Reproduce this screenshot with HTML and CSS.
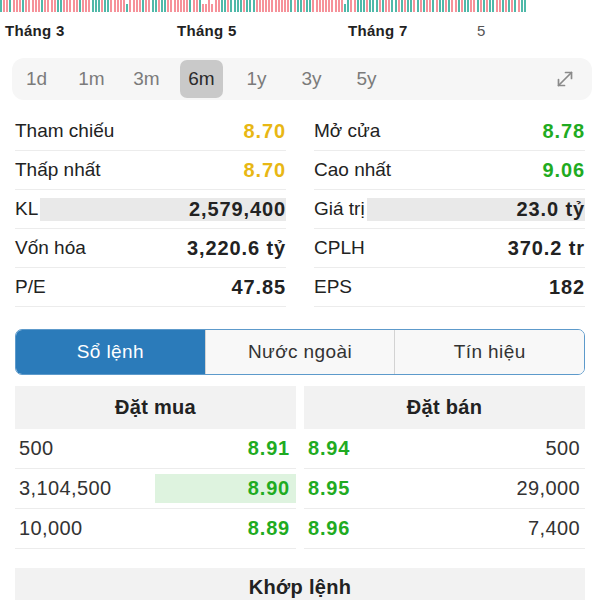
FILE: index.html
```html
<!DOCTYPE html>
<html lang="vi">
<head>
<meta charset="utf-8">
<title>Chi tiết cổ phiếu</title>
<link rel="stylesheet" href="styles.css">
</head>
<body>
<div class="bars">
<i class="g"></i><i class="r"></i><i class="r"></i><i class="g"></i><i class="r"></i><i class="r"></i><i class="r"></i><i class="g"></i><i class="r"></i><i class="r"></i><i class="r"></i><i class="r"></i><i class="r"></i><i class="g"></i><i class="r"></i><i class="r"></i><i class="r"></i><i class="r"></i><i class="g"></i><i class="g"></i><i class="r"></i><i class="r"></i><i class="r"></i><i class="r"></i><i class="r"></i><i class="g"></i><i class="r"></i><i class="r"></i><i class="r"></i><i class="g"></i><i class="g"></i><i class="g"></i><i class="r"></i><i class="g"></i><i class="g"></i><i class="r"></i><i class="r"></i><i class="r"></i><i class="r"></i><i class="r"></i><i class="g s"></i><i class="r"></i><i class="r"></i><i class="r"></i><i class="r"></i><i class="g"></i><i class="r"></i><i class="r"></i><i class="g"></i><i class="g"></i><i class="r"></i><i class="g"></i><i class="g"></i><i class="r"></i><i class="r"></i><i class="r"></i><i class="r"></i><i class="r"></i><i class="r"></i><i class="r"></i><i class="g"></i><i class="r"></i><i class="r"></i><i class="g"></i>
<i class="r s"></i><i class="r s"></i><i class="r"></i><i class="r s"></i><i class="r"></i><i class="r"></i><i class="g"></i><i class="g"></i><i class="r"></i><i class="g"></i><i class="g"></i><i class="g"></i><i class="g"></i><i class="r"></i><i class="g"></i><i class="g"></i><i class="g"></i><i class="r"></i><i class="r"></i><i class="r"></i><i class="r"></i><i class="r"></i><i class="r"></i><i class="r"></i><i class="r"></i><i class="r"></i><i class="r"></i><i class="r"></i><i class="g"></i><i class="r"></i><i class="g"></i><i class="g"></i><i class="r"></i><i class="g"></i><i class="g"></i><i class="r"></i><i class="r"></i><i class="r"></i><i class="r"></i><i class="r"></i><i class="r"></i><i class="r"></i><i class="r"></i><i class="r"></i><i class="r"></i><i class="g s"></i><i class="g"></i><i class="r"></i><i class="r"></i><i class="g"></i><i class="g"></i><i class="g"></i><i class="r"></i><i class="g"></i><i class="g"></i><i class="g"></i><i class="r"></i><i class="g"></i><i class="r"></i><i class="r"></i><i class="g"></i><i class="g"></i>
<i class="r"></i><i class="g"></i><i class="r"></i><i class="g"></i><i class="g"></i><i class="r"></i><i class="g"></i><i class="r"></i><i class="g"></i><i class="r"></i><i class="r"></i><i class="g"></i><i class="r"></i><i class="g"></i><i class="g"></i><i class="r"></i><i class="g"></i><i class="r"></i><i class="r"></i><i class="g"></i><i class="r"></i><i class="g"></i><i class="g"></i><i class="r"></i><i class="r"></i><i class="g"></i><i class="r"></i><i class="g"></i><i class="r"></i><i class="g"></i><i class="g"></i><i class="r"></i><i class="r"></i><i class="g"></i><i class="r"></i><i class="g"></i><i class="r"></i><i class="g"></i><i class="r"></i><i class="g"></i><i class="g"></i>
</div>

<div class="months">
  <span>Tháng 3</span>
  <span>Tháng 5</span>
  <span>Tháng 7</span>
  <span class="plain">5</span>
</div>

<div class="range">
  <span class="range-item">1d</span>
  <span class="range-item">1m</span>
  <span class="range-item">3m</span>
  <span class="range-item active">6m</span>
  <span class="range-item">1y</span>
  <span class="range-item">3y</span>
  <span class="range-item">5y</span>
  <svg class="expand" viewBox="0 0 20 20" width="20" height="20" fill="none" stroke="#8a8a8a" stroke-width="1.7" stroke-linecap="round" stroke-linejoin="round">
    <path d="M3.5 16.5 L16.5 3.5"/>
    <path d="M10.5 3.5 H16.5 V9.5"/>
    <path d="M3.5 10.5 V16.5 H9.5"/>
  </svg>
</div>

<div class="stats">
  <div class="stat"><span>Tham chiếu</span><span class="v yellow">8.70</span></div>
  <div class="stat"><span>Mở cửa</span><span class="v green">8.78</span></div>
  <div class="stat"><span>Thấp nhất</span><span class="v yellow">8.70</span></div>
  <div class="stat"><span>Cao nhất</span><span class="v green">9.06</span></div>
  <div class="stat"><span>KL</span><span class="v bar">2,579,400</span></div>
  <div class="stat"><span>Giá trị</span><span class="v bar">23.0 tỷ</span></div>
  <div class="stat"><span>Vốn hóa</span><span class="v">3,220.6 tỷ</span></div>
  <div class="stat"><span>CPLH</span><span class="v">370.2 tr</span></div>
  <div class="stat"><span>P/E</span><span class="v">47.85</span></div>
  <div class="stat"><span>EPS</span><span class="v">182</span></div>
</div>

<div class="tabs">
  <div class="tab active">Sổ lệnh</div>
  <div class="tab">Nước ngoài</div>
  <div class="tab">Tín hiệu</div>
</div>

<div class="book">
  <div class="book-col">
    <div class="book-head">Đặt mua</div>
    <div class="book-row buy"><span class="qty">500</span><span class="price">8.91</span></div>
    <div class="book-row buy"><span class="qty">3,104,500</span><span class="price hl" style="width:141px">8.90</span></div>
    <div class="book-row buy"><span class="qty">10,000</span><span class="price">8.89</span></div>
  </div>
  <div class="book-col">
    <div class="book-head">Đặt bán</div>
    <div class="book-row sell"><span class="price">8.94</span><span class="qty">500</span></div>
    <div class="book-row sell"><span class="price">8.95</span><span class="qty">29,000</span></div>
    <div class="book-row sell"><span class="price">8.96</span><span class="qty">7,400</span></div>
  </div>
</div>

<div class="khop">Khớp lệnh</div>
</body>
</html>
```

FILE: styles.css
```css
* { box-sizing: border-box; }

html, body {
  margin: 0;
  background: #ffffff;
}

body {
  width: 600px;
  height: 600px;
  overflow: hidden;
  font-family: "Liberation Sans", Arial, sans-serif;
  color: #222222;
}

/* chart volume strip */
.bars {
  display: flex;
  justify-content: space-between;
  align-items: flex-end;
  width: 527px;
  height: 12px;
}
.bars i {
  display: block;
  width: 2px;
  height: 12px;
}
.bars .r { background: #f6929a; }
.bars .g { background: #4fb9a9; }
.bars .s { height: 8px; }

/* month axis */
.months {
  display: grid;
  grid-template-columns: 172px 171px 129px auto;
  padding-left: 5px;
  margin-top: 11px;
  font-size: 15px;
  line-height: 16px;
  letter-spacing: 0.3px;
  font-weight: bold;
  color: #222222;
}
.months .plain {
  font-weight: normal;
  color: #555555;
}

/* range selector */
.range {
  display: flex;
  align-items: center;
  gap: 12px;
  height: 42px;
  margin: 19px 8px 0 12px;
  padding: 0 3px;
  background: #f6f6f6;
  border-radius: 12px;
}
.range-item {
  width: 43px;
  height: 38px;
  line-height: 38px;
  text-align: center;
  font-size: 19px;
  color: #7b7b7b;
  border-radius: 7px;
}
.range-item.active {
  background: #c9c9c9;
  color: #2a2a2a;
}
.expand {
  margin-left: auto;
  margin-right: 14px;
}

/* stats grid */
.stats {
  display: grid;
  grid-template-columns: 271px 271px;
  column-gap: 28px;
  padding: 0 15px;
  margin-top: 12px;
}
.stat {
  display: flex;
  align-items: center;
  height: 39px;
  border-bottom: 1px solid #ececec;
  font-size: 19px;
  color: #222222;
}
.stat .v {
  margin-left: auto;
  font-size: 20px;
  letter-spacing: 0.9px;
  font-weight: bold;
}
.stat .bar {
  flex: 1;
  height: 23px;
  margin-left: 2px;
  display: flex;
  align-items: center;
  justify-content: flex-end;
  background: #e9e9e9;
}
.yellow { color: #e8b714; }
.green { color: #1fab22; }

/* segmented tabs */
.tabs {
  display: flex;
  height: 46px;
  margin: 22px 15px 0;
  border: 1px solid #5d9acb;
  border-radius: 7px;
  overflow: hidden;
}
.tab {
  flex: 1;
  display: flex;
  align-items: center;
  justify-content: center;
  font-size: 19px;
  letter-spacing: 0.4px;
  color: #333333;
  background: #f8f8f8;
  border-left: 1px solid #d3d3d3;
}
.tab.active {
  background: #2b7bba;
  color: #ffffff;
  border-left: none;
}

/* order book */
.book {
  display: grid;
  grid-template-columns: 1fr 1fr;
  column-gap: 8px;
  margin: 11px 15px 0;
}
.book-head {
  height: 43px;
  display: flex;
  align-items: center;
  justify-content: center;
  background: #f2f2f2;
  font-size: 20px;
  letter-spacing: 0.3px;
  font-weight: bold;
  color: #222222;
}
.book-row {
  display: flex;
  align-items: center;
  height: 40px;
  border-bottom: 1px solid #ececec;
  font-size: 20px;
}
.book-row .qty {
  flex: 1;
  letter-spacing: 0.4px;
  color: #333333;
}
.book-row .price {
  font-weight: bold;
  letter-spacing: 0.8px;
  color: #1fab22;
}
.book-row.buy { padding-left: 4px; }
.book-row.buy .price {
  height: 29px;
  line-height: 29px;
  padding-right: 6px;
  text-align: right;
}
.book-row.sell { padding: 0 5px 0 4px; }
.book-row.sell .qty { text-align: right; }
.price.hl { background: #def3df; }

.khop {
  height: 38px;
  margin: 19px 15px 0;
  display: flex;
  align-items: center;
  justify-content: center;
  background: #f2f2f2;
  font-size: 20px;
  letter-spacing: 0.3px;
  font-weight: bold;
  color: #222222;
}
```
